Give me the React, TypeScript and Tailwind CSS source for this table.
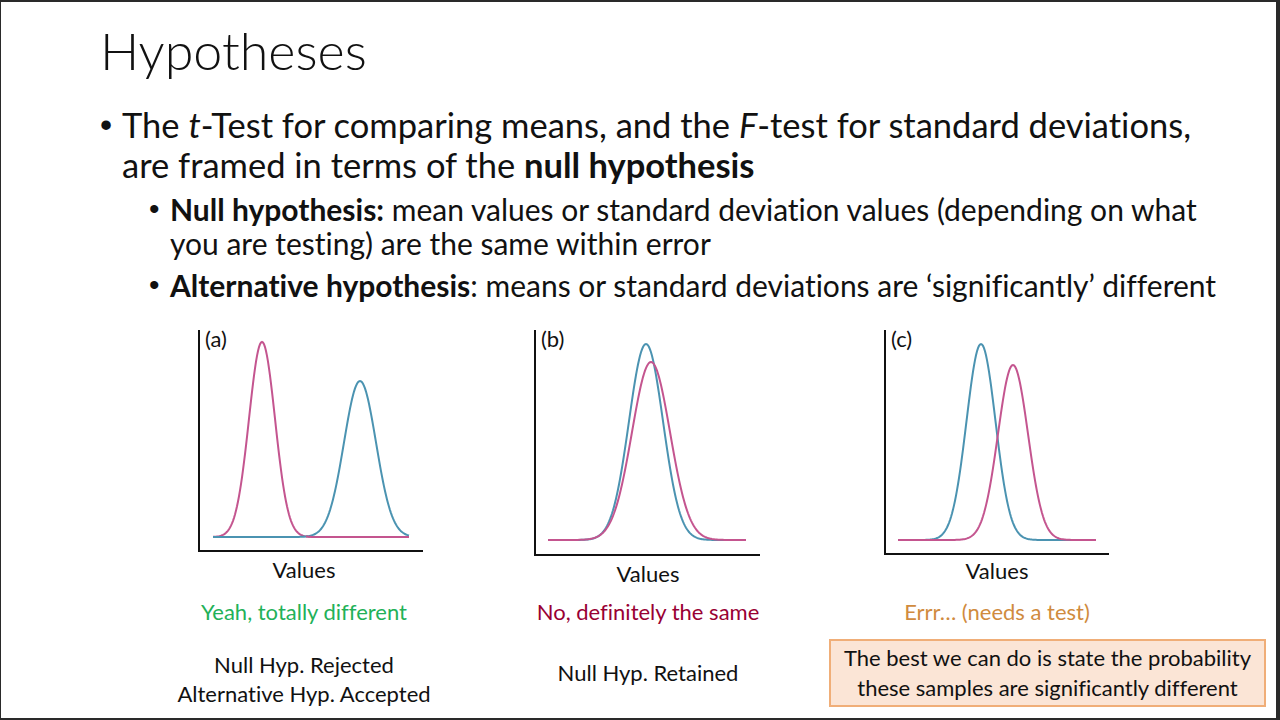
const PINK = "#c4558f"
const BLUE = "#4b93b1"

function curve(x0: number, x1: number, mu: number, s: number, top: number, base: number) {
  let d = ""
  for (let x = x0; x <= x1; x += 1) {
    const y = base - (base - top) * Math.exp(-((x - mu) ** 2) / (2 * s * s))
    d += (x === x0 ? "M" : "L") + x + " " + y.toFixed(2) + " "
  }
  return d
}

type Curve = { x0: number; x1: number; mu: number; s: number; top: number; color: string }

const charts = [
  {
    label: "(a)",
    left: 184,
    base: 537,
    axisX: 199,
    axisY: 551,
    axisEnd: 423,
    curves: [
      { x0: 213, x1: 409, mu: 262, s: 13, top: 342, color: PINK },
      { x0: 213, x1: 409, mu: 360, s: 16, top: 381, color: BLUE },
      { x0: 306, x1: 409, mu: 262, s: 13, top: 342, color: PINK },
    ],
  },
  {
    label: "(b)",
    left: 528,
    base: 540,
    axisX: 535,
    axisY: 555,
    axisEnd: 760,
    curves: [
      { x0: 548, x1: 746, mu: 646, s: 17, top: 344, color: BLUE },
      { x0: 548, x1: 746, mu: 651, s: 19, top: 362, color: PINK },
    ],
  },
  {
    label: "(c)",
    left: 877,
    base: 540,
    axisX: 885,
    axisY: 554,
    axisEnd: 1109,
    curves: [
      { x0: 898, x1: 1096, mu: 981, s: 14.5, top: 344, color: BLUE },
      { x0: 898, x1: 1096, mu: 1013, s: 15, top: 365, color: PINK },
    ],
  },
]

function Chart({ index }: { index: number }) {
  const c = charts[index]
  return (
    <div className="relative w-[240px] h-[232px]">
      <svg width="240" height="232" viewBox={`${c.left} 325 240 232`} className="block">
        <path
          d={`M${c.axisX} 330 L${c.axisX} ${c.axisY} L${c.axisEnd} ${c.axisY}`}
          fill="none"
          stroke="#111"
          strokeWidth="2"
        />
        {c.curves.map((k: Curve, i) => (
          <path
            key={i}
            d={curve(k.x0, k.x1, k.mu, k.s, k.top, c.base)}
            fill="none"
            stroke={k.color}
            strokeWidth="2"
          />
        ))}
      </svg>
      <span
        className="absolute top-[2px] text-[22px] leading-6 text-[#111]"
        style={{ left: c.axisX + 6 - c.left }}
      >
        {c.label}
      </span>
    </div>
  )
}

function Bullet({ w }: { w: string }) {
  return <span className={`${w} shrink-0 font-['Liberation_Sans',sans-serif]`}>•</span>
}

export default function App() {
  return (
    <div className="w-[1280px] h-[720px] bg-white border-t-2 border-b-2 border-l border-r-4 border-[#2a2a2a] font-['Lato',sans-serif] text-[#111] overflow-hidden [font-variant-ligatures:none]">
      {/* Title */}
      <h1 className="pl-[99px] pt-[22px] text-[52px] font-light leading-none">Hypotheses</h1>

      {/* Bullets */}
      <div className="pt-[29px]">
        <div className="flex pl-[99px] text-[34.5px] leading-[40px]">
          <Bullet w="w-[22px]" />
          <p>
            The <i>t</i>-Test for comparing means, and the <i>F</i>-test for standard deviations,
            <br />
            are framed in terms of the <b>null hypothesis</b>
          </p>
        </div>
        <div className="flex flex-col gap-[8px] pt-[7px] pl-[148px] text-[30px] leading-[34px]">
          <div className="flex">
            <Bullet w="w-[21px]" />
            <p>
              <b>Null hypothesis:</b> mean values or standard deviation values (depending on what
              <br />
              you are testing) are the same within error
            </p>
          </div>
          <div className="flex">
            <Bullet w="w-[21px]" />
            <p>
              <b>Alternative hypothesis</b>: means or standard deviations are ‘significantly’ different
            </p>
          </div>
        </div>
      </div>

      {/* Charts */}
      <div className="mt-[23px] flex text-[22px] text-center">
        <div className="ml-[183px] w-[240px] flex flex-col items-center">
          <Chart index={0} />
          <div className="mt-[1px] leading-6">Values</div>
          <div className="mt-[17px] leading-[26px] text-[#22b158]">Yeah, totally different</div>
          <div className="mt-[25px] leading-[29px] whitespace-nowrap">
            Null Hyp. Rejected
            <br />
            Alternative Hyp. Accepted
          </div>
        </div>
        <div className="ml-[104px] w-[240px] flex flex-col items-center">
          <Chart index={1} />
          <div className="mt-[5px] leading-6">Values</div>
          <div className="mt-[13px] leading-[26px] text-[#990033]">No, definitely the same</div>
          <div className="mt-[33px] leading-[29px]">Null Hyp. Retained</div>
        </div>
        <div className="ml-[61px] w-[437px] flex flex-col">
          <div className="ml-[48px] w-[240px] flex flex-col items-center">
            <Chart index={2} />
            <div className="mt-[2px] leading-6">Values</div>
            <div className="mt-[16px] leading-[26px] text-[#d08b3e] whitespace-nowrap">Errr… (needs a test)</div>
          </div>
          <div className="mt-[14px] h-[68px] bg-[#fbe5d6] border-2 border-[#f0ae78] pt-[2px] leading-[30px] whitespace-nowrap">
            The best we can do is state the probability
            <br />
            these samples are significantly different
          </div>
        </div>
      </div>
    </div>
  )
}
